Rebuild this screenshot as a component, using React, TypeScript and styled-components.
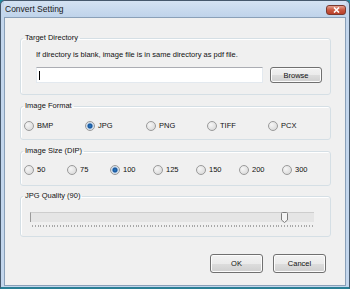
import styled, { createGlobalStyle } from "styled-components";

const GlobalStyle = createGlobalStyle`
  html, body {
    margin: 0;
    padding: 0;
    background: #1f8ca3;
  }
  body {
    font-family: "Liberation Sans", Arial, sans-serif;
    font-size: 7.5px;
    color: #111;
  }
`;

const Window = styled.div`
  width: 350px;
  height: 289px;
  box-sizing: border-box;
  display: flex;
  flex-direction: column;
  border: 1px solid #46586c;
  border-bottom: 2px solid #2a7f95;
  border-radius: 5px 5px 0 0;
  background: #c3d6ec;
  padding: 0 3px 1px 3px;
  overflow: hidden;
`;

const TitleBar = styled.div`
  height: 16px;
  display: flex;
  align-items: center;
  justify-content: space-between;
  padding-left: 1px;
  background: linear-gradient(#d4e2f2, #bfd3ea);
`;

const Title = styled.span`
  font-size: 8.5px;
  color: #1a1a1a;
`;

const CloseButton = styled.div`
  width: 20px;
  height: 10px;
  margin-top: 2px;
  box-sizing: border-box;
  border: 1px solid #7a3a2f;
  border-radius: 3px;
  background: linear-gradient(#e5a08f, #c9573f 50%, #b9402a);
  display: flex;
  align-items: center;
  justify-content: center;
`;

const Client = styled.div`
  flex: 1;
  display: flex;
  flex-direction: column;
  background: #f0f0f0;
  border: 1px solid #8aa0b8;
  padding: 15px 14px 0 15px;
`;

const Group = styled.fieldset<{ $mt: number; $pt: number; $pb: number }>`
  margin: ${(p) => p.$mt}px 0 0 0;
  padding: ${(p) => p.$pt}px 0 ${(p) => p.$pb}px 0;
  border: 1px solid #d5dfe5;
  border-radius: 3px;
  min-inline-size: 0;
  box-shadow: inset 1px 1px 0 #fff;
`;

const Legend = styled.legend`
  margin-left: 2px;
  padding: 0 2px;
  line-height: 10px;
  font-size: 7.5px;
`;

const HelpText = styled.div`
  margin: 7px 0 0 15px;
  line-height: 10px;
`;

const DirRow = styled.div`
  display: flex;
  gap: 7px;
  margin: 7px 0 0 15px;
`;

const TextField = styled.div`
  width: 227px;
  height: 16px;
  box-sizing: border-box;
  background: #fff;
  border: 1px solid #e3e9ef;
  border-top-color: #abadb3;
  display: flex;
  align-items: center;
  padding-left: 2px;
`;

const Caret = styled.span`
  width: 1px;
  height: 9px;
  background: #000;
`;

const Button = styled.button<{ $w: number }>`
  width: ${(p) => p.$w}px;
  height: ${(p) => (p.$w > 52 ? 19 : 16)}px;
  box-sizing: border-box;
  padding: 0;
  font-family: "Liberation Sans", Arial, sans-serif;
  font-size: 7.5px;
  color: #111;
  border: 1px solid #707070;
  border-radius: 3px;
  background: linear-gradient(#f2f2f2, #ebebeb 50%, #dddddd 51%, #cfcfcf);
  box-shadow: inset 0 0 0 1px #fcfcfc;
`;

const RadioRow = styled.div`
  display: flex;
  padding-left: 3px;
`;

const RadioItem = styled.label<{ $w: number }>`
  width: ${(p) => p.$w}px;
  display: flex;
  align-items: center;
  gap: 3px;
  line-height: 10px;
`;

const RadioDot = styled.span<{ $on: boolean }>`
  width: 10px;
  height: 10px;
  box-sizing: border-box;
  border-radius: 50%;
  border: 1px solid #9a9a9a;
  background: ${(p) =>
    p.$on
      ? "radial-gradient(circle, #2d7fc7 0, #15539a 2px, #bcd3ea 3px, #e8e8e8 4px)"
      : "radial-gradient(circle at 35% 35%, #f6f6f6, #d4d4d4)"};
`;

const Track = styled.div`
  width: 284px;
  height: 10px;
  box-sizing: border-box;
  margin: 11px 0 0 9px;
  background: #e5e5e5;
  border-top: 1px solid #cdcdcd;
  border-left: 1px solid #9a9a9a;
  display: flex;
  align-items: flex-start;
`;

const Thumb = styled.svg`
  margin: -1px 0 0 250px;
`;

const Ticks = styled.div`
  width: 282px;
  height: 2px;
  margin: 3px 0 0 11px;
  background: repeating-linear-gradient(
    to right,
    #a8a8a8 0,
    #a8a8a8 1px,
    transparent 1px,
    transparent 2.8px
  );
`;

const ButtonRow = styled.div`
  display: flex;
  justify-content: flex-end;
  gap: 10px;
  margin: 17px 5px 0 0;
`;

const formats = ["BMP", "JPG", "PNG", "TIFF", "PCX"];
const sizes = ["50", "75", "100", "125", "150", "200", "300"];

export default function App() {
  return (
    <>
      <GlobalStyle />
      <Window>
        <TitleBar>
          <Title>Convert Setting</Title>
          <CloseButton>
            <svg width="7" height="6" viewBox="0 0 7 6">
              <path d="M1 0.5 L6 5.5 M6 0.5 L1 5.5" stroke="#fff" strokeWidth="1.6" />
            </svg>
          </CloseButton>
        </TitleBar>
        <Client>
          <Group $mt={0} $pt={0} $pb={11}>
            <Legend>Target Directory</Legend>
            <HelpText>If directory is blank, image file is in same directory as pdf file.</HelpText>
            <DirRow>
              <TextField>
                <Caret />
              </TextField>
              <Button $w={52}>Browse</Button>
            </DirRow>
          </Group>
          <Group $mt={6} $pt={10} $pb={8}>
            <Legend>Image Format</Legend>
            <RadioRow>
              {formats.map((f) => (
                <RadioItem key={f} $w={61}>
                  <RadioDot $on={f === "JPG"} />
                  {f}
                </RadioItem>
              ))}
            </RadioRow>
          </Group>
          <Group $mt={6} $pt={9} $pb={10}>
            <Legend>Image Size (DIP)</Legend>
            <RadioRow>
              {sizes.map((s) => (
                <RadioItem key={s} $w={43}>
                  <RadioDot $on={s === "100"} />
                  {s}
                </RadioItem>
              ))}
            </RadioRow>
          </Group>
          <Group $mt={5} $pt={0} $pb={9}>
            <Legend>JPG Quality (90)</Legend>
            <Track>
              <Thumb width="7" height="11" viewBox="0 0 7 11">
                <path
                  d="M0.5 1.5 Q0.5 0.5 1.5 0.5 H5.5 Q6.5 0.5 6.5 1.5 V8 L3.5 10.5 L0.5 8 Z"
                  fill="#f4f4f4"
                  stroke="#7c7c7c"
                />
              </Thumb>
            </Track>
            <Ticks />
          </Group>
          <ButtonRow>
            <Button $w={53}>OK</Button>
            <Button $w={53}>Cancel</Button>
          </ButtonRow>
        </Client>
      </Window>
    </>
  );
}
